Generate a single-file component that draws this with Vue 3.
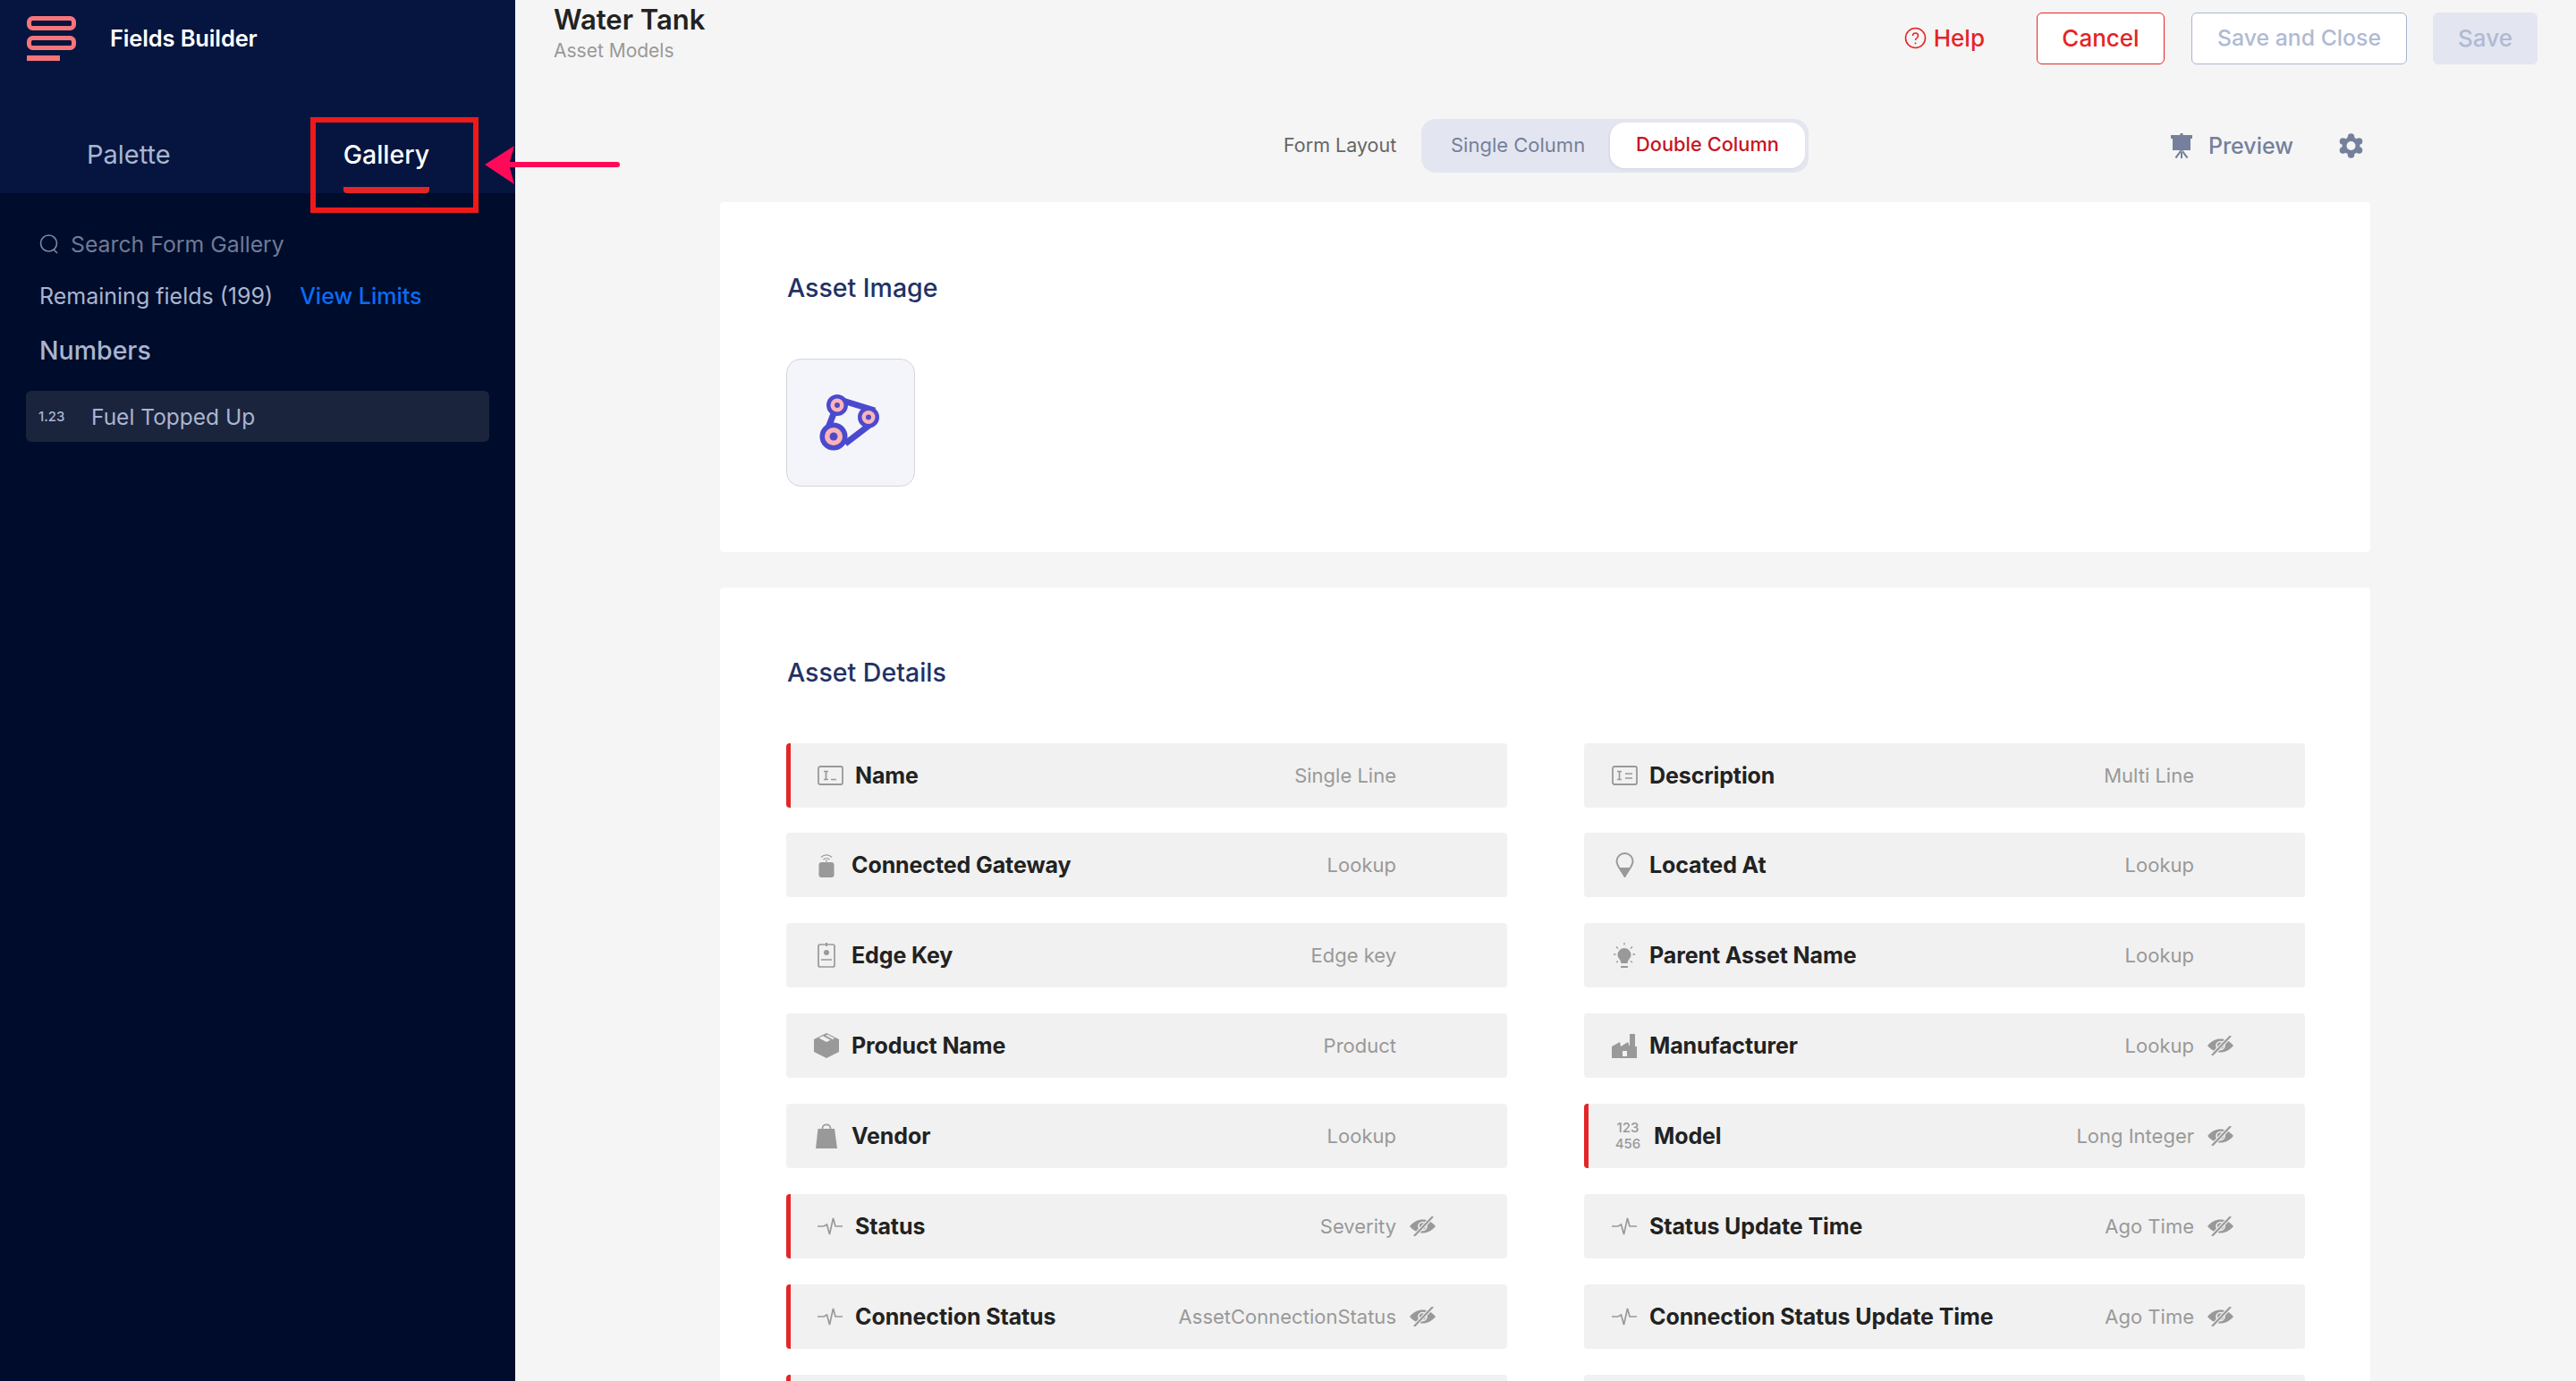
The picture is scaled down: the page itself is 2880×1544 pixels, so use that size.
<template>
  <div class="page">
    <aside class="sidebar">
      <div class="side-head">
        <div class="brand">
          <svg class="logo" width="56" height="50" viewBox="0 0 56 50">
            <rect x="2.5" y="2.5" width="50" height="11" rx="4" fill="none" stroke="#f6757a" stroke-width="5" />
            <rect x="2.5" y="24.5" width="50" height="11" rx="4" fill="none" stroke="#f6757a" stroke-width="5" />
            <rect x="0" y="44" width="37" height="6" fill="#f6757a" />
          </svg>
          <span class="brand-name">Fields Builder</span>
        </div>
        <div class="tabs">
          <div class="tab">Palette</div>
          <div class="tab active">
            Gallery
            <span class="callout"></span>
          </div>
        </div>
      </div>
      <div class="side-body">
        <div class="search">
          <svg width="22" height="24" viewBox="0 0 22 24" fill="none" stroke="#7d88a4" stroke-width="1.6">
            <circle cx="10.5" cy="11" r="9" />
            <path d="M16 18l4 4" />
          </svg>
          <span>Search Form Gallery</span>
        </div>
        <div class="remaining">
          <span>Remaining fields (199)</span>
          <a class="limits">View Limits</a>
        </div>
        <div class="group">Numbers</div>
        <div class="gallery-item">
          <span class="num">1.23</span>
          <span>Fuel Topped Up</span>
        </div>
      </div>
    </aside>

    <main class="main">
      <header class="topbar">
        <div class="titles">
          <div class="title">Water Tank</div>
          <div class="subtitle">Asset Models</div>
        </div>
        <div class="actions">
          <a class="help">
            <svg width="25" height="25" viewBox="0 0 25 25" fill="none" stroke="#e42527" stroke-width="1.6">
              <circle cx="12.5" cy="12.5" r="11" />
              <path d="M9.5 10c0-4 6-4 6 0 0 2.500-3 2.500-3 5" />
              <path d="M12.500 17.500v1.800" />
            </svg>
            Help
          </a>
          <button class="btn cancel">Cancel</button>
          <button class="btn ghost">Save and Close</button>
          <button class="btn save">Save</button>
        </div>
      </header>

      <div class="layoutbar">
        <span class="layout-label">Form Layout</span>
        <div class="toggle">
          <span class="opt">Single Column</span>
          <span class="opt on">Double Column</span>
        </div>
        <a class="preview">
          <svg width="24" height="28" viewBox="0 0 24 28" fill="#75809c">
            <rect x="0" y="2" width="24" height="4" />
            <rect x="2" y="5" width="20" height="14" />
            <rect x="10.500" y="0" width="3" height="3" />
            <path d="M11 18h2v10h-2zM10.500 19l1.700 1-5.700 8-2-1zM13.500 19l-1.700 1 5.700 8 2-1z" />
          </svg>
          Preview
        </a>
        <svg class="gear" width="27" height="28" viewBox="0 0 27 28">
          <g fill="#75809c">
            <circle cx="13.500" cy="14" r="10" />
            <circle cx="13.500" cy="4" r="3.800" />
            <circle cx="13.500" cy="24" r="3.800" />
            <circle cx="4.500" cy="9" r="3.800" />
            <circle cx="22.500" cy="9" r="3.800" />
            <circle cx="4.500" cy="19" r="3.800" />
            <circle cx="22.500" cy="19" r="3.800" />
          </g>
          <circle cx="13.500" cy="14" r="5" fill="#f5f5f5" />
        </svg>
      </div>

      <section class="card">
        <h2>Asset Image</h2>
        <div class="image-box">
          <svg width="72" height="66" viewBox="0 0 72 66">
            <path d="M21 12L8 46M21 6l42 13M64 30L30 56" stroke="#4a4acf" stroke-width="7" fill="none" />
            <circle cx="21" cy="13" r="12" fill="#4a4acf" />
            <circle cx="21" cy="13" r="7.500" fill="#ffb3b3" />
            <circle cx="21" cy="13" r="3" fill="#4a4acf" />
            <circle cx="56" cy="26.500" r="12" fill="#4a4acf" />
            <circle cx="56" cy="26.500" r="7.500" fill="#ffb3b3" />
            <circle cx="56" cy="26.500" r="3" fill="#4a4acf" />
            <circle cx="17" cy="48" r="15.500" fill="#4a4acf" />
            <circle cx="17" cy="48" r="10" fill="#ffb3b3" />
            <circle cx="17" cy="48" r="4.500" fill="#4a4acf" />
          </svg>
        </div>
      </section>

      <section class="card details">
        <h2>Asset Details</h2>
        <div class="fields">
          <div v-for="(f, i) in fields" :key="i" class="field" :class="{ req: f.req }">
            <span class="ficon">
              <span v-if="f.icon === 'num'" class="num-icon">123<br />456</span>
              <svg v-else-if="f.icon" :width="icons[f.icon].w" :height="icons[f.icon].h" :viewBox="`0 0 ${icons[f.icon].w} ${icons[f.icon].h}`" v-html="icons[f.icon].body"></svg>
            </span>
            <span class="fname" :class="{ gap: f.icon === 'num' }">{{ f.name }}</span>
            <span class="ftype">{{ f.type }}</span>
            <span class="feye">
              <svg v-if="f.hidden" width="29" height="22" viewBox="0 0 29 22" v-html="eye"></svg>
            </span>
          </div>
        </div>
      </section>
    </main>

    <svg class="arrow" width="156" height="50" viewBox="0 0 156 50">
      <path d="M0 21L33 0L27 21L33 43Z" fill="#ff0a58" />
      <rect x="25" y="18" width="126" height="6" rx="3" fill="#ff0a58" />
    </svg>
  </div>
</template>

<script setup>
const grey = '#999'

const pulse = `<path d="M0 10h7l3.500-2 3 11 4-18 2.500 9h8.500" fill="none" stroke="${grey}" stroke-width="1.700"/>`

const icons = {
  single: {
    w: 29, h: 22,
    body: `<rect x="1" y="1" width="27" height="20" rx="2" fill="none" stroke="${grey}" stroke-width="1.800"/><path d="M7 6.500h5M9.500 6.500v9M7 15.500h5M15 15.500h6" fill="none" stroke="${grey}" stroke-width="1.700"/>`
  },
  multi: {
    w: 29, h: 22,
    body: `<rect x="1" y="1" width="27" height="20" rx="2" fill="none" stroke="${grey}" stroke-width="1.800"/><path d="M6 6.500h5M8.500 6.500v9M6 15.500h5M15 9h8M15 14h8" fill="none" stroke="${grey}" stroke-width="1.700"/>`
  },
  gateway: {
    w: 18, h: 27,
    body: `<rect x="0.500" y="10" width="17" height="17" rx="3" fill="${grey}"/><path d="M3 4.500c3.500-3.500 8.500-3.500 12 0M5.500 7c2-2 5-2 7 0" fill="none" stroke="${grey}" stroke-width="1.200"/><circle cx="9" cy="8.500" r="1" fill="${grey}"/>`
  },
  key: {
    w: 20, h: 28,
    body: `<rect x="1" y="2" width="18" height="25" rx="2" fill="none" stroke="${grey}" stroke-width="1.700"/><rect x="9" y="0" width="2" height="4" fill="${grey}"/><circle cx="10" cy="11" r="3" fill="${grey}"/><path d="M4 19h12" stroke="${grey}" stroke-width="1.500"/>`
  },
  box: {
    w: 28, h: 28,
    body: `<path d="M14 0L28 7v14L14 28 0 21V7z" fill="${grey}"/><path d="M5.500 5.500L10 3.200 18.500 7.800 14 10z" fill="#f1f1f1"/><path d="M13 2.700L15 1.700 23 5.800 21 6.900z" fill="#f1f1f1"/>`
  },
  bag: {
    w: 24, h: 28,
    body: `<path d="M2.500 6H21L24 28H0z" fill="${grey}"/><path d="M7.500 9V5.500c0-5.500 9-5.500 9 0V9" fill="none" stroke="${grey}" stroke-width="1.700"/>`
  },
  pulse: { w: 28, h: 20, body: pulse },
  pin: {
    w: 21, h: 28,
    body: `<path d="M10.500 27C6 19 1.500 15 1.500 10a9 9 0 0 1 18 0C19.500 15 15 19 10.500 27z" fill="none" stroke="${grey}" stroke-width="2"/><path d="M5 17h11l-5.500 11z" fill="${grey}"/>`
  },
  bulb: {
    w: 24, h: 29,
    body: `<path d="M12 6a7.500 7.500 0 0 1 7.500 7.500c0 4-3.500 5-4 9.500h-7c-.5-4.500-4-5.500-4-9.500A7.500 7.500 0 0 1 12 6z" fill="${grey}"/><path d="M8 27h8" stroke="${grey}" stroke-width="2"/><path d="M12 0v2.500M3 4.500l2 2M21 4.500l-2 2M0 13h2.500M21.500 13H24M3 22l2-1.500M21 22l-2-1.500" stroke="${grey}" stroke-width="1.300"/>`
  },
  factory: {
    w: 28, h: 27,
    body: `<path fill-rule="evenodd" d="M0 27V14L9 9l1 5 8-5 2 5V0h6v14h2v13zM12 19v6h5v-6z" fill="${grey}"/>`
  }
}

const eye = `<path d="M0 11C5 5.500 9 3.500 14.500 3.500S24 5.500 29 11c-5 5.500-9 7.500-14.500 7.500S5 16.500 0 11z" fill="${grey}"/><circle cx="14.500" cy="11" r="4.500" fill="none" stroke="#f1f1f1" stroke-width="1.600"/><path d="M26 0L5 22" stroke="#f1f1f1" stroke-width="4.500"/><path d="M26 0L5 22" stroke="${grey}" stroke-width="2.200"/>`

const fields = [
  { name: 'Name', type: 'Single Line', icon: 'single', req: true },
  { name: 'Description', type: 'Multi Line', icon: 'multi' },
  { name: 'Connected Gateway', type: 'Lookup', icon: 'gateway' },
  { name: 'Located At', type: 'Lookup', icon: 'pin' },
  { name: 'Edge Key', type: 'Edge key', icon: 'key' },
  { name: 'Parent Asset Name', type: 'Lookup', icon: 'bulb' },
  { name: 'Product Name', type: 'Product', icon: 'box' },
  { name: 'Manufacturer', type: 'Lookup', icon: 'factory', hidden: true },
  { name: 'Vendor', type: 'Lookup', icon: 'bag' },
  { name: 'Model', type: 'Long Integer', icon: 'num', req: true, hidden: true },
  { name: 'Status', type: 'Severity', icon: 'pulse', req: true, hidden: true },
  { name: 'Status Update Time', type: 'Ago Time', icon: 'pulse', hidden: true },
  { name: 'Connection Status', type: 'AssetConnectionStatus', icon: 'pulse', req: true, hidden: true },
  { name: 'Connection Status Update Time', type: 'Ago Time', icon: 'pulse', hidden: true },
  { name: '', type: '', req: true },
  { name: '', type: '' }
]
</script>

<style>
body {
  margin: 0;
  overflow: hidden;
}
</style>

<style scoped>
.page {
  position: relative;
  display: flex;
  width: 2880px;
  height: 1544px;
  overflow: hidden;
  background: #f5f5f5;
  font-family: Inter, "Liberation Sans", sans-serif;
}

.sidebar {
  width: 576px;
  flex-shrink: 0;
  display: flex;
  flex-direction: column;
  background: #000c2b;
}

.side-head {
  height: 216px;
  background: #05153f;
  display: flex;
  flex-direction: column;
  justify-content: space-between;
}

.brand {
  display: flex;
  align-items: center;
  padding: 18px 0 0 30px;
}

.brand-name {
  margin-left: 37px;
  margin-top: -1px;
  font-size: 25.500px;
  font-weight: 600;
  color: #fff;
  letter-spacing: -0.15px;
}

.tabs {
  display: flex;
  padding-left: 97px;
}

.tab {
  position: relative;
  height: 63px;
  line-height: 40px;
  box-sizing: border-box;
  font-size: 29px;
  color: #a9b5d0;
  margin-right: 193px;
}

.tab.active {
  color: #fff;
  font-size: 28.500px;
  font-weight: 500;
  margin-right: 0;
  border-bottom: 7px solid #e42527;
  border-radius: 0 0 4px 4px;
}

.callout {
  position: absolute;
  left: -37px;
  top: -22px;
  width: 176px;
  height: 95px;
  border: 6px solid #ee1a1a;
}

.side-body {
  padding: 42px 29px 0 44px;
  color: #a9b5d0;
}

.search {
  display: flex;
  align-items: center;
  height: 30px;
  gap: 13px;
  font-size: 24.800px;
  color: #6f7a96;
}

.remaining {
  display: flex;
  gap: 30px;
  height: 30px;
  line-height: 30px;
  margin-top: 28px;
  font-size: 25px;
}

.limits {
  color: #0a6cf5;
  font-weight: 500;
}

.group {
  margin-top: 26px;
  height: 40px;
  line-height: 40px;
  font-size: 28.500px;
  font-weight: 500;
}

.gallery-item {
  display: flex;
  align-items: center;
  height: 57px;
  margin: 25px 0 0 -15px;
  background: #1a243c;
  border-radius: 6px;
  padding-left: 14px;
  font-size: 24.500px;
}

.num {
  width: 59px;
  font-size: 15px;
  font-weight: 500;
}

.main {
  flex: 1;
  min-width: 0;
}

.topbar {
  height: 133px;
  box-sizing: border-box;
  display: flex;
  justify-content: space-between;
  padding: 0 43px;
}

.title {
  margin-top: 1px;
  height: 42px;
  line-height: 42px;
  font-size: 31px;
  font-weight: 600;
  color: #222;
}

.subtitle {
  font-size: 21px;
  line-height: 28px;
  color: #999;
}

.actions {
  display: flex;
  align-items: center;
  height: 58px;
  margin-top: 14px;
}

.help {
  display: flex;
  align-items: center;
  gap: 8px;
  margin-right: 58px;
  padding-bottom: 2px;
  color: #e42527;
  font-size: 26px;
  font-weight: 500;
}

.btn {
  height: 58px;
  box-sizing: border-box;
  border-radius: 6px;
  font-family: inherit;
  font-size: 26px;
  font-weight: 500;
  padding: 0 0 2px;
}

.cancel {
  width: 143px;
  background: #fff;
  border: 1.5px solid #e42527;
  color: #e42527;
  margin-right: 30px;
}

.ghost {
  width: 241px;
  background: #fff;
  border: 1.5px solid #a9b5d0;
  color: #b0bad4;
  font-size: 24.800px;
  margin-right: 29px;
}

.save {
  width: 117px;
  background: #e3e6f0;
  border: none;
  color: #b0bad4;
}

.layoutbar {
  display: flex;
  align-items: center;
  height: 60px;
  padding: 0 238px 0 859px;
}

.layout-label {
  width: 154px;
  padding-bottom: 2px;
  font-size: 21.500px;
  color: #666;
}

.toggle {
  display: flex;
  align-items: center;
  justify-content: space-between;
  width: 433px;
  height: 60px;
  box-sizing: border-box;
  padding: 0 4px 2px 33px;
  background: #e3e6f0;
  border-radius: 16px;
  font-size: 22px;
  color: #75809c;
}

.opt.on {
  width: 218px;
  height: 51px;
  line-height: 49px;
  text-align: center;
  background: #fff;
  border-radius: 16px;
  color: #c8141e;
  font-size: 21.800px;
  font-weight: 500;
  box-shadow: -1px 1px 3px rgba(0, 0, 0, 0.08);
}

.preview {
  display: flex;
  align-items: center;
  gap: 18px;
  margin-left: auto;
  margin-right: 51px;
  font-size: 25px;
  font-weight: 500;
  color: #75809c;
}

.card {
  margin: 33px 230px 0 229px;
  padding: 76px 73px 73px 74px;
  background: #fff;
  border-radius: 4px;
}

.card.details {
  margin-top: 40px;
  padding-top: 75px;
}

h2 {
  margin: 0 0 59px;
  padding-left: 1px;
  height: 40px;
  line-height: 40px;
  font-size: 28.500px;
  font-weight: 500;
  color: #1f3266;
}

.details h2 {
  margin-bottom: 58.500px;
}

.image-box {
  display: flex;
  align-items: center;
  justify-content: center;
  width: 144px;
  height: 143px;
  box-sizing: border-box;
  background: #f4f4fb;
  border: 1.5px solid #d5d5da;
  border-radius: 16px;
}

.fields {
  display: grid;
  grid-template-columns: 806px 806px;
  column-gap: 86px;
  row-gap: 28.900px;
}

.field {
  display: flex;
  align-items: center;
  height: 72px;
  box-sizing: border-box;
  padding: 0 80px 0 30px;
  background: #f1f1f1;
  border-radius: 4px;
}

.field.req {
  border-left: 5px solid #e42527;
  padding-left: 29px;
}

.ficon {
  display: flex;
  align-items: center;
  justify-content: center;
  width: 30px;
  flex-shrink: 0;
}

.num-icon {
  font-size: 15px;
  line-height: 18px;
  font-weight: 500;
  text-align: center;
  color: #999;
}

.fname {
  margin-left: 13px;
  font-size: 25px;
  font-weight: 700;
  letter-spacing: -0.1px;
  color: #222;
}

.fname.gap {
  margin-left: 14px;
}

.ftype {
  margin-left: auto;
  font-size: 22px;
  color: #999;
}

.feye {
  display: flex;
  justify-content: flex-end;
  width: 44px;
  flex-shrink: 0;
}

.arrow {
  position: absolute;
  left: 542px;
  top: 163px;
}
</style>
